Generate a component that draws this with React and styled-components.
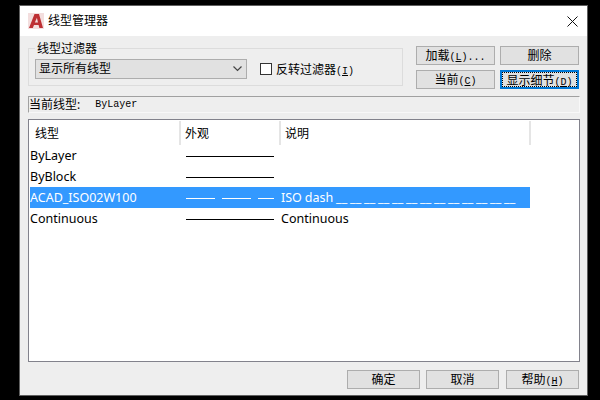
import styled, { createGlobalStyle } from "styled-components";

const Global = createGlobalStyle`
  html, body { margin: 0; height: 100%; background: #000; }
  body { font-family: "Noto Sans", "Noto Sans CJK SC", sans-serif; font-size: 12px; color: #000; }
`;

const Screen = styled.div`
  width: 600px;
  height: 400px;
  padding: 5px 0 0 19px;
  box-sizing: border-box;
`;

const Dialog = styled.div`
  width: 569px;
  height: 391px;
  box-sizing: border-box;
  border: 1px solid #5f5f5f;
  background: #eeeeee;
  display: flex;
  flex-direction: column;
`;

const TitleBar = styled.div`
  height: 30px;
  flex: none;
  background: #fff;
  display: flex;
  align-items: center;
  padding: 0 9px 0 8px;
  font-size: 12px;
`;

const TitleText = styled.span`
  margin-left: 4px;
  flex: 1;
  line-height: 16px;
  margin-top: -1px;
`;

const Body = styled.div`
  flex: 1;
  padding: 10px 7px 0 8px;
  display: flex;
  flex-direction: column;
`;

const TopRow = styled.div`
  display: flex;
  gap: 13px;
  align-items: flex-start;
  height: 43px;
`;

const FilterGroup = styled.div`
  position: relative;
  width: 375px;
  height: 38px;
  margin-top: 2px;
  box-sizing: border-box;
  border: 1px solid #dcdcdc;
  display: flex;
  align-items: center;
  padding: 3px 0 0 6px;
`;

const Legend = styled.span`
  position: absolute;
  top: -8px;
  left: 6px;
  padding: 0 2px;
  background: #eeeeee;
  line-height: 15px;
`;

const Select = styled.div`
  width: 212px;
  height: 20px;
  box-sizing: border-box;
  border: 1px solid #adadad;
  background: #e1e1e1;
  display: flex;
  align-items: center;
  justify-content: space-between;
  padding: 0 4px 0 3px;
  line-height: 18px;
`;

const Check = styled.span`
  width: 12px;
  height: 12px;
  box-sizing: border-box;
  border: 1px solid #333;
  background: #fff;
  margin-left: 13px;
  margin-right: 4px;
`;

const ButtonGrid = styled.div`
  display: grid;
  grid-template-columns: 79px 79px;
  grid-auto-rows: 19px;
  gap: 5px;
`;

const Button = styled.button`
  width: ${({ $width }) => $width || "100%"};
  height: 19px;
  box-sizing: border-box;
  padding: 0;
  border: ${({ $focus }) => ($focus ? "2px solid #0078d7" : "1px solid #adadad")};
  outline: ${({ $focus }) => ($focus ? "1px dotted #000" : "none")};
  outline-offset: -3px;
  background: #e1e1e1;
  color: #000;
  font: inherit;
  line-height: 17px;
  white-space: nowrap;
`;

// half-width part of a label: parens, access key and dots are 6px each
const Half = styled.span`
  font-family: "Liberation Mono", monospace;
  font-size: 10px;
`;

const Key = styled.span`
  text-decoration: underline;
`;

const CurrentLine = styled.div`
  height: 17px;
  margin-top: 7px;
  box-sizing: border-box;
  border-top: 1px solid #a0a0a0;
  border-left: 1px solid #a0a0a0;
  border-right: 1px solid #f8f8f8;
  border-bottom: 1px solid #f8f8f8;
  display: flex;
  align-items: center;
  line-height: 15px;
`;

const CurrentValue = styled.span`
  margin-left: 15px;
  font-family: "Liberation Mono", monospace;
  font-size: 10px;
`;

const ListBox = styled.div`
  width: 552px;
  height: 243px;
  margin-top: 6px;
  box-sizing: border-box;
  border: 1px solid #82828c;
  background: #fff;
  padding: 1px;
`;

const Row = styled.div`
  display: grid;
  grid-template-columns: 151px 100px 250px;
  width: 500px;
  height: ${({ $head }) => ($head ? "24px" : "21px")};
  align-items: center;
  background: ${({ $selected }) => ($selected ? "#3399ff" : "transparent")};
  color: ${({ $selected }) => ($selected ? "#fff" : "#000")};
  font-size: 12.5px;
`;

const HeadCell = styled.div`
  height: 24px;
  box-sizing: border-box;
  border-right: 2px solid #e5e5e5;
  padding-left: ${({ $pad }) => $pad}px;
  font-size: 12px;
  line-height: 25px;
`;

const Cell = styled.div`
  white-space: nowrap;
  line-height: 21px;
  height: 21px;
`;

const DescCell = styled(Cell)`
  word-spacing: -0.35px;
`;

const Sample = styled.svg`
  display: block;
  margin: 11px 0 0 5px;
`;

const Footer = styled.div`
  display: flex;
  justify-content: flex-end;
  gap: 6px;
  margin-top: 8px;
  padding-right: 1px;

  & > :last-child {
    margin-left: 1px;
  }
`;

function Logo() {
  return (
    <svg width="16" height="16" viewBox="0 0 16 16">
      <rect width="16" height="16" fill="#f3dede" />
      <path d="M1 15 L6.5 1 H11 L15 15 H11.4 L10.6 12 H6 L4.8 15 Z" fill="#bd2f33" />
      <path d="M6.9 9.5 H10 L8.9 4.8 Z" fill="#f3dede" />
    </svg>
  );
}

function CloseIcon() {
  return (
    <svg width="11" height="11" viewBox="0 0 11 11">
      <path d="M0.5 0.5 L10.5 10.5 M10.5 0.5 L0.5 10.5" stroke="#111" strokeWidth="1" fill="none" />
    </svg>
  );
}

function Chevron() {
  return (
    <svg width="9" height="6" viewBox="0 0 9 6">
      <path d="M0.5 0.5 L4.5 4.5 L8.5 0.5" stroke="#444" strokeWidth="1.2" fill="none" />
    </svg>
  );
}

function LineSample({ dashed, color }) {
  return (
    <Sample width="88" height="1" viewBox="0 0 88 1">
      {dashed ? (
        <path d="M0 .5 H29 M36 .5 H65 M72 .5 H88" stroke={color} />
      ) : (
        <path d="M0 .5 H88" stroke={color} />
      )}
    </Sample>
  );
}

const Label = ({ text, hotkey, tail }) => (
  <>
    {text}
    <Half>
      (<Key>{hotkey}</Key>){tail}
    </Half>
  </>
);

const linetypes = [
  { name: "ByLayer" },
  { name: "ByBlock" },
  {
    name: "ACAD_ISO02W100",
    desc: "ISO dash __ __ __ __ __ __ __ __ __ __ __ __ __",
    dashed: true,
    selected: true,
  },
  { name: "Continuous", desc: "Continuous" },
];

export default function App() {
  return (
    <Screen>
      <Global />
      <Dialog>
        <TitleBar>
          <Logo />
          <TitleText>线型管理器</TitleText>
          <CloseIcon />
        </TitleBar>
        <Body>
          <TopRow>
            <FilterGroup>
              <Legend>线型过滤器</Legend>
              <Select>
                显示所有线型
                <Chevron />
              </Select>
              <Check />
              <span>
                <Label text="反转过滤器" hotkey="I" />
              </span>
            </FilterGroup>
            <ButtonGrid>
              <Button>
                <Label text="加载" hotkey="L" tail="..." />
              </Button>
              <Button>删除</Button>
              <Button>
                <Label text="当前" hotkey="C" />
              </Button>
              <Button $focus>
                <Label text="显示细节" hotkey="D" />
              </Button>
            </ButtonGrid>
          </TopRow>
          <CurrentLine>
            当前线型:
            <CurrentValue>ByLayer</CurrentValue>
          </CurrentLine>
          <ListBox>
            <Row $head>
              <HeadCell $pad={5}>线型</HeadCell>
              <HeadCell $pad={4}>外观</HeadCell>
              <HeadCell $pad={4}>说明</HeadCell>
            </Row>
            {linetypes.map((t) => (
              <Row key={t.name} $selected={t.selected}>
                <Cell>{t.name}</Cell>
                <Cell>
                  <LineSample dashed={t.dashed} color={t.selected ? "#fff" : "#000"} />
                </Cell>
                <DescCell>{t.desc}</DescCell>
              </Row>
            ))}
          </ListBox>
          <Footer>
            <Button $width="73px">确定</Button>
            <Button $width="73px">取消</Button>
            <Button $width="73px">
              <Label text="帮助" hotkey="H" />
            </Button>
          </Footer>
        </Body>
      </Dialog>
    </Screen>
  );
}
